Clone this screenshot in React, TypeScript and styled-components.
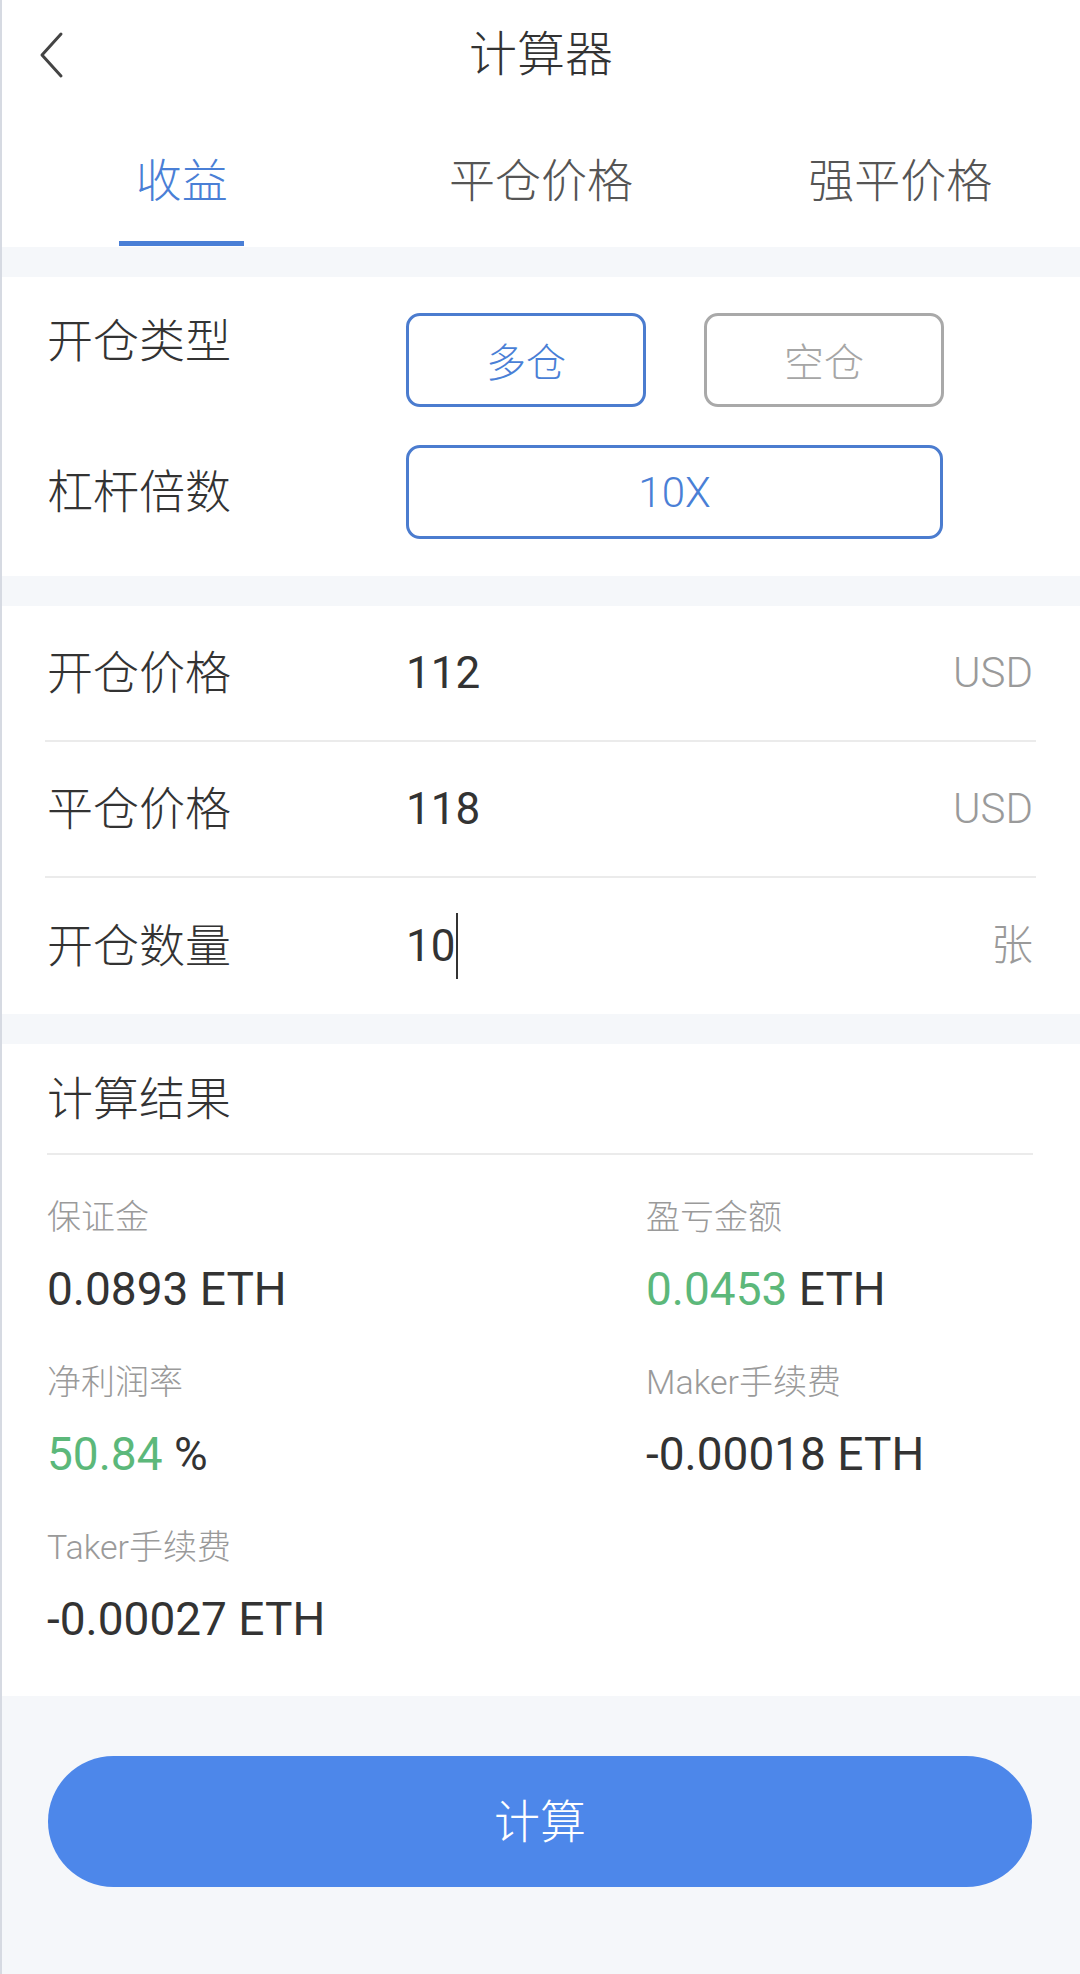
import React from 'react';
import styled, { createGlobalStyle } from 'styled-components';

const GlobalStyle = createGlobalStyle`
  html, body {
    margin: 0;
    padding: 0;
    background: #f5f7fa;
  }
  body {
    font-family: Roboto, "Noto Sans CJK SC", sans-serif;
    color: #333;
  }
`;

const BLUE = '#4a7fd6';
const GREEN = '#5cb87a';

const Page = styled.div`
  min-height: 1974px;
  background: #f5f7fa;
  border-left: 2px solid #d6dae2;
  box-sizing: border-box;
`;

const Header = styled.header`
  display: grid;
  grid-template-columns: 1fr auto 1fr;
  align-items: center;
  height: 110px;
  background: #fff;
`;

const BackButton = styled.button`
  justify-self: start;
  margin-left: 34px;
  padding: 0;
  border: none;
  background: none;
  display: flex;
  color: #444;
`;

const Title = styled.h1`
  margin: 0;
  font-size: 48px;
  line-height: 1;
  font-weight: 300;
  color: #333;
`;

const TabBar = styled.nav`
  display: grid;
  grid-template-columns: repeat(3, 1fr);
  height: 137px;
  background: #fff;
`;

const Tab = styled.div<{ $active?: boolean }>`
  display: flex;
  flex-direction: column;
  align-items: center;
  padding-top: 48px;
  font-size: 46px;
  font-weight: 300;
  line-height: 1;
  color: ${p => (p.$active ? BLUE : '#555')};
`;

const TabLine = styled.span`
  margin-top: 37px;
  width: 125px;
  height: 5px;
  background: ${BLUE};
`;

const Section = styled.section`
  margin-top: 30px;
  background: #fff;
`;

const TypeSection = styled(Section)`
  display: flex;
  flex-direction: column;
  gap: 38px;
  padding: 36px 0 37px 45px;
`;

const OptionRow = styled.div<{ $top?: boolean }>`
  display: grid;
  grid-template-columns: 359px 1fr;
  align-items: ${p => (p.$top ? 'start' : 'center')};
`;

const Label = styled.span<{ $offset?: number }>`
  font-size: 46px;
  font-weight: 300;
  line-height: 1;
  color: #333;
  padding-top: ${p => p.$offset ?? 0}px;
`;

const Options = styled.div`
  display: flex;
  gap: 58px;
`;

const OptionButton = styled.div<{ $active?: boolean; $wide?: boolean }>`
  box-sizing: border-box;
  width: ${p => (p.$wide ? 537 : 240)}px;
  height: 94px;
  border: 3px solid ${p => (p.$active ? '#4b7ccf' : '#a9a9a9')};
  border-radius: 14px;
  display: flex;
  align-items: center;
  justify-content: center;
  font-size: ${p => (p.$wide ? 42 : 40)}px;
  font-weight: 300;
  color: ${p => (p.$active ? BLUE : '#a6a6a6')};
`;

const InputRow = styled.div<{ $last?: boolean }>`
  box-sizing: border-box;
  height: 136px;
  margin: 0 44px 0 43px;
  padding: 0 3px 0 2px;
  display: grid;
  grid-template-columns: 359px 1fr auto;
  align-items: center;
  border-bottom: ${p => (p.$last ? 'none' : '2px solid #ebebeb')};
`;

const Value = styled.span`
  display: flex;
  align-items: center;
  font-size: 44px;
  line-height: 1;
  color: #333;
`;

const Caret = styled.span`
  display: inline-block;
  width: 2px;
  height: 66px;
  margin-left: 1px;
  background: #333;
`;

const Unit = styled.span`
  font-size: 42px;
  font-weight: 300;
  line-height: 1;
  color: #9a9a9a;
`;

const ResultTitle = styled.div`
  box-sizing: border-box;
  height: 111px;
  margin: 0 47px 0 45px;
  display: flex;
  align-items: center;
  font-size: 46px;
  font-weight: 300;
  line-height: 1;
  color: #333;
  border-bottom: 2px solid #ebebeb;
`;

const ResultGrid = styled.div`
  display: grid;
  grid-template-columns: 599px 1fr;
  row-gap: 53px;
  padding: 45px 0 54px 45px;
`;

const ResultItem = styled.div`
  display: flex;
  flex-direction: column;
  gap: 32px;
`;

const ResultLabel = styled.span`
  font-size: 34px;
  font-weight: 300;
  line-height: 1;
  color: #9a9a9a;
`;

const ResultValue = styled.span`
  font-size: 46px;
  line-height: 1;
  color: #333;
  white-space: pre;
`;

const Up = styled.span`
  color: ${GREEN};
`;

const Footer = styled.div`
  padding: 60px 48px 0 46px;
`;

const SubmitButton = styled.button`
  width: 100%;
  height: 131px;
  border: none;
  border-radius: 66px;
  background: #4d87ea;
  color: #fff;
  font-family: inherit;
  font-size: 46px;
  font-weight: 300;
  line-height: 1;
`;

const ChevronLeft = () => (
  <svg width="30" height="48" viewBox="0 0 30 48" fill="none">
    <polyline points="25,3 6,24 25,45" stroke="currentColor" strokeWidth="3" strokeLinecap="round" strokeLinejoin="round" />
  </svg>
);

const tabs = ['收益', '平仓价格', '强平价格'];

const inputs = [
  { label: '开仓价格', value: '112', unit: 'USD' },
  { label: '平仓价格', value: '118', unit: 'USD' },
  { label: '开仓数量', value: '10', unit: '张', focused: true },
];

const App: React.FC = () => {
  return (
    <Page>
      <GlobalStyle />
      <Header>
        <BackButton aria-label="back">
          <ChevronLeft />
        </BackButton>
        <Title>计算器</Title>
        <span />
      </Header>

      <TabBar>
        {tabs.map((t, i) => (
          <Tab key={t} $active={i === 0}>
            {t}
            {i === 0 && <TabLine />}
          </Tab>
        ))}
      </TabBar>

      <TypeSection>
        <OptionRow $top>
          <Label $offset={5}>开仓类型</Label>
          <Options>
            <OptionButton $active>多仓</OptionButton>
            <OptionButton>空仓</OptionButton>
          </Options>
        </OptionRow>
        <OptionRow>
          <Label>杠杆倍数</Label>
          <Options>
            <OptionButton $active $wide>10X</OptionButton>
          </Options>
        </OptionRow>
      </TypeSection>

      <Section>
        {inputs.map((row, i) => (
          <InputRow key={row.label} $last={i === inputs.length - 1}>
            <Label>{row.label}</Label>
            <Value>
              {row.value}
              {row.focused && <Caret />}
            </Value>
            <Unit>{row.unit}</Unit>
          </InputRow>
        ))}
      </Section>

      <Section>
        <ResultTitle>计算结果</ResultTitle>
        <ResultGrid>
          <ResultItem>
            <ResultLabel>保证金</ResultLabel>
            <ResultValue>0.0893 ETH</ResultValue>
          </ResultItem>
          <ResultItem>
            <ResultLabel>盈亏金额</ResultLabel>
            <ResultValue><Up>0.0453</Up> ETH</ResultValue>
          </ResultItem>
          <ResultItem>
            <ResultLabel>净利润率</ResultLabel>
            <ResultValue><Up>50.84</Up> %</ResultValue>
          </ResultItem>
          <ResultItem>
            <ResultLabel>Maker手续费</ResultLabel>
            <ResultValue>-0.00018 ETH</ResultValue>
          </ResultItem>
          <ResultItem>
            <ResultLabel>Taker手续费</ResultLabel>
            <ResultValue>-0.00027 ETH</ResultValue>
          </ResultItem>
        </ResultGrid>
      </Section>

      <Footer>
        <SubmitButton>计算</SubmitButton>
      </Footer>
    </Page>
  );
};

export default App;
